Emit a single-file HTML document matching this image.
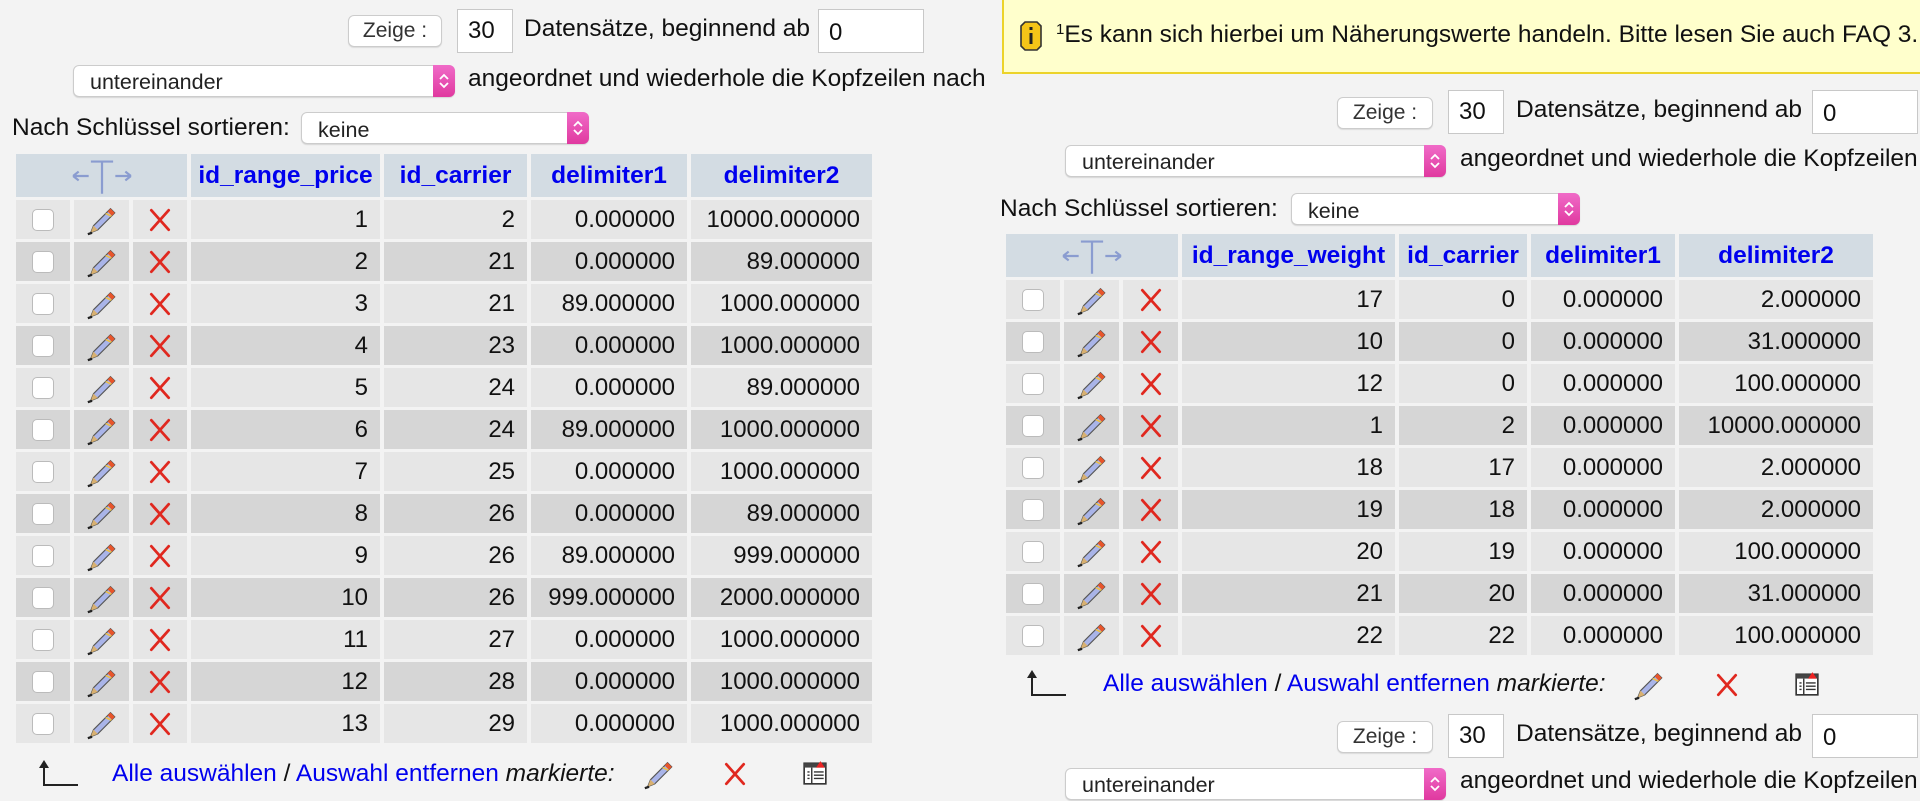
<!DOCTYPE html>
<html><head><meta charset="utf-8">
<style>
*{box-sizing:border-box;margin:0;padding:0}
body{width:1920px;height:794px;overflow:hidden;background:#f3f3f3;font-family:"Liberation Sans",Arial,sans-serif;font-size:24.5px;color:#111;position:relative}
.a{position:absolute;white-space:nowrap}
.btn{position:absolute;background:#fff;border:1px solid #ccc;border-radius:6px;font-size:21px;color:#333;text-align:center;box-shadow:0 1px 1px rgba(0,0,0,.1)}
.inp{position:absolute;background:#fff;border:1px solid #c8c8c8;font-size:24px;padding-left:10px}
.sel{position:absolute;background:#fff;border:1px solid #ccc;border-radius:6px;font-size:21.5px;color:#222;padding-left:16px;box-shadow:0 1px 1px rgba(0,0,0,.12)}
.sel .st{position:absolute;right:-1px;top:-1px;bottom:-1px;width:22px;border-radius:0 6px 6px 0;background:linear-gradient(#f06bc8,#e0399f)}
.sel .st svg{position:absolute;left:5px;top:50%;margin-top:-8px}
table{position:absolute;border-collapse:separate;border-spacing:4px 3px;table-layout:fixed}
th{background:#d3dce3;color:#0000ee;font-weight:bold;font-size:24.5px;height:43px;text-align:center;white-space:nowrap}
td{height:39px;text-align:right;padding-right:12px;font-size:24px}
tr.o td{background:#e6e6e6}
tr.e td{background:#d6d6d6}
td.i{padding:0;text-align:center}
td.i svg{vertical-align:middle}
.cb{display:inline-block;width:22px;height:22px;background:#fff;border:1px solid #bbb;border-radius:5px;vertical-align:middle}
.lnk{color:#0000ee}
</style></head><body>
<svg width="0" height="0" style="position:absolute">
<defs>
<symbol id="pen" viewBox="0 0 24 24"><path d="M4 21 L6 16 L18 4 L21 7 L9 19 Z" fill="#a9b4e8" stroke="#555" stroke-width="0.8"/><path d="M16 6 L18 4 L21 7 L19 9 Z" fill="#e8552a"/><path d="M15 7 L19 9 L18.2 9.8 L14.2 7.8Z" fill="#f0c040"/><path d="M4 21 L6 16 L9 19 Z" fill="#d8b070"/><path d="M2 22 L5 21" stroke="#222" stroke-width="1.6"/></symbol>
<symbol id="x" viewBox="0 0 24 24"><path d="M4 3 L20 21 M20 3 L4 21" stroke="#e0281f" stroke-width="2.6" stroke-linecap="round"/></symbol>
<symbol id="exp" viewBox="0 0 24 24"><rect x="2" y="3" width="20" height="19" fill="#fff" stroke="#333" stroke-width="1.5"/><rect x="2" y="3" width="20" height="4" fill="#444"/><path d="M9 7V22 M5 11H7 M5 14H7 M5 17H7 M11 11H20 M11 14H20 M11 17H20" stroke="#333" stroke-width="1.3"/><path d="M13 7 L17 1 L21 7Z" fill="#e22"/></symbol>
<symbol id="ar" viewBox="0 0 44 30"><path d="M8 4 V27 H42" fill="none" stroke="#222" stroke-width="2"/><path d="M3 10 L8 2 L13 10Z" fill="#222"/></symbol>
<symbol id="stp" viewBox="0 0 12 16"><path d="M2 6 L6 2 L10 6 M2 10 L6 14 L10 10" fill="none" stroke="#fff" stroke-width="1.8"/></symbol>
<symbol id="hd" viewBox="0 0 60 36"><path d="M4 18 H18 M4 18 L9 14 M4 18 L9 22 M42 18 H56 M56 18 L51 14 M56 18 L51 22 M20 5 H40 M30 5 V34" fill="none" stroke="#8a9cd0" stroke-width="2"/></symbol>
</defs></svg>

<!-- LEFT controls -->
<div class="btn" style="left:348px;top:15px;width:94px;height:32px;line-height:30px">Zeige :</div>
<div class="inp" style="left:457px;top:9px;width:56px;height:44px;line-height:42px">30</div>
<div class="a" style="left:524px;top:15px">Datensätze, beginnend ab</div>
<div class="inp" style="left:818px;top:9px;width:106px;height:44px;line-height:46px">0</div>
<div class="sel" style="left:73px;top:65px;width:382px;height:32px;line-height:32px">untereinander<div class="st"><svg width="12" height="16"><use href="#stp"/></svg></div></div>
<div class="a" style="left:468px;top:65px">angeordnet und wiederhole die Kopfzeilen nach</div>
<div class="a" style="left:12px;top:114px">Nach Schlüssel sortieren:</div>
<div class="sel" style="left:301px;top:112px;width:288px;height:32px;line-height:34px">keine<div class="st"><svg width="12" height="16"><use href="#stp"/></svg></div></div>

<table style="left:12px;top:151px;width:860px">
<colgroup><col style="width:54px"><col style="width:55px"><col style="width:54px"><col style="width:189px"><col style="width:143px"><col style="width:156px"><col style="width:181px"></colgroup>
<tr><th colspan="3"><svg width="72" height="40" style="vertical-align:middle"><use href="#hd"/></svg></th><th>id_range_price</th><th>id_carrier</th><th>delimiter1</th><th>delimiter2</th></tr>
<tr class="o"><td class="i"><span class="cb"></span></td><td class="i"><svg width="34" height="34"><use href="#pen"/></svg></td><td class="i"><svg width="26" height="26"><use href="#x"/></svg></td><td>1</td><td>2</td><td>0.000000</td><td>10000.000000</td></tr>
<tr class="e"><td class="i"><span class="cb"></span></td><td class="i"><svg width="34" height="34"><use href="#pen"/></svg></td><td class="i"><svg width="26" height="26"><use href="#x"/></svg></td><td>2</td><td>21</td><td>0.000000</td><td>89.000000</td></tr>
<tr class="o"><td class="i"><span class="cb"></span></td><td class="i"><svg width="34" height="34"><use href="#pen"/></svg></td><td class="i"><svg width="26" height="26"><use href="#x"/></svg></td><td>3</td><td>21</td><td>89.000000</td><td>1000.000000</td></tr>
<tr class="e"><td class="i"><span class="cb"></span></td><td class="i"><svg width="34" height="34"><use href="#pen"/></svg></td><td class="i"><svg width="26" height="26"><use href="#x"/></svg></td><td>4</td><td>23</td><td>0.000000</td><td>1000.000000</td></tr>
<tr class="o"><td class="i"><span class="cb"></span></td><td class="i"><svg width="34" height="34"><use href="#pen"/></svg></td><td class="i"><svg width="26" height="26"><use href="#x"/></svg></td><td>5</td><td>24</td><td>0.000000</td><td>89.000000</td></tr>
<tr class="e"><td class="i"><span class="cb"></span></td><td class="i"><svg width="34" height="34"><use href="#pen"/></svg></td><td class="i"><svg width="26" height="26"><use href="#x"/></svg></td><td>6</td><td>24</td><td>89.000000</td><td>1000.000000</td></tr>
<tr class="o"><td class="i"><span class="cb"></span></td><td class="i"><svg width="34" height="34"><use href="#pen"/></svg></td><td class="i"><svg width="26" height="26"><use href="#x"/></svg></td><td>7</td><td>25</td><td>0.000000</td><td>1000.000000</td></tr>
<tr class="e"><td class="i"><span class="cb"></span></td><td class="i"><svg width="34" height="34"><use href="#pen"/></svg></td><td class="i"><svg width="26" height="26"><use href="#x"/></svg></td><td>8</td><td>26</td><td>0.000000</td><td>89.000000</td></tr>
<tr class="o"><td class="i"><span class="cb"></span></td><td class="i"><svg width="34" height="34"><use href="#pen"/></svg></td><td class="i"><svg width="26" height="26"><use href="#x"/></svg></td><td>9</td><td>26</td><td>89.000000</td><td>999.000000</td></tr>
<tr class="e"><td class="i"><span class="cb"></span></td><td class="i"><svg width="34" height="34"><use href="#pen"/></svg></td><td class="i"><svg width="26" height="26"><use href="#x"/></svg></td><td>10</td><td>26</td><td>999.000000</td><td>2000.000000</td></tr>
<tr class="o"><td class="i"><span class="cb"></span></td><td class="i"><svg width="34" height="34"><use href="#pen"/></svg></td><td class="i"><svg width="26" height="26"><use href="#x"/></svg></td><td>11</td><td>27</td><td>0.000000</td><td>1000.000000</td></tr>
<tr class="e"><td class="i"><span class="cb"></span></td><td class="i"><svg width="34" height="34"><use href="#pen"/></svg></td><td class="i"><svg width="26" height="26"><use href="#x"/></svg></td><td>12</td><td>28</td><td>0.000000</td><td>1000.000000</td></tr>
<tr class="o"><td class="i"><span class="cb"></span></td><td class="i"><svg width="34" height="34"><use href="#pen"/></svg></td><td class="i"><svg width="26" height="26"><use href="#x"/></svg></td><td>13</td><td>29</td><td>0.000000</td><td>1000.000000</td></tr>
</table>

<svg class="a" style="left:36px;top:758px" width="44" height="30"><use href="#ar"/></svg>
<div class="a" style="left:112px;top:760px"><span class="lnk">Alle auswählen</span> / <span class="lnk">Auswahl entfernen</span> <i>markierte:</i></div>
<svg class="a" style="left:642px;top:757px" width="34" height="34"><use href="#pen"/></svg>
<svg class="a" style="left:722px;top:761px" width="26" height="26"><use href="#x"/></svg>
<svg class="a" style="left:802px;top:760px" width="26" height="26"><use href="#exp"/></svg>

<!-- RIGHT -->
<div class="a" style="left:1002px;top:0;width:940px;height:74px;background:#ffffcc;border:2px solid #ecd32a;border-top:none"></div>
<svg class="a" style="left:1020px;top:21px" width="22" height="30" viewBox="0 0 22 30"><path d="M5 1 H17 L21 5 V25 L17 29 H5 L1 25 V5 Z" fill="#f5c518" stroke="#333" stroke-width="1.6"/><rect x="9.5" y="12" width="3" height="11" fill="#222"/><rect x="9.5" y="6" width="3" height="3" fill="#222"/></svg>
<div class="a" style="left:1056px;top:21px"><sup style="font-size:15px;vertical-align:8px">1</sup>Es kann sich hierbei um Näherungswerte handeln. Bitte lesen Sie auch FAQ 3.11</div>

<div class="btn" style="left:1337px;top:97px;width:96px;height:32px;line-height:30px">Zeige :</div>
<div class="inp" style="left:1448px;top:90px;width:56px;height:44px;line-height:42px">30</div>
<div class="a" style="left:1516px;top:96px">Datensätze, beginnend ab</div>
<div class="inp" style="left:1812px;top:90px;width:106px;height:44px;line-height:46px">0</div>
<div class="sel" style="left:1065px;top:145px;width:381px;height:32px;line-height:32px">untereinander<div class="st"><svg width="12" height="16"><use href="#stp"/></svg></div></div>
<div class="a" style="left:1460px;top:145px">angeordnet und wiederhole die Kopfzeilen nach</div>
<div class="a" style="left:1000px;top:195px">Nach Schlüssel sortieren:</div>
<div class="sel" style="left:1291px;top:193px;width:289px;height:32px;line-height:34px">keine<div class="st"><svg width="12" height="16"><use href="#stp"/></svg></div></div>

<table style="left:1002px;top:231px;width:875px">
<colgroup><col style="width:54px"><col style="width:55px"><col style="width:55px"><col style="width:213px"><col style="width:128px"><col style="width:144px"><col style="width:194px"></colgroup>
<tr><th colspan="3"><svg width="72" height="40" style="vertical-align:middle"><use href="#hd"/></svg></th><th>id_range_weight</th><th>id_carrier</th><th>delimiter1</th><th>delimiter2</th></tr>
<tr class="o"><td class="i"><span class="cb"></span></td><td class="i"><svg width="34" height="34"><use href="#pen"/></svg></td><td class="i"><svg width="26" height="26"><use href="#x"/></svg></td><td>17</td><td>0</td><td>0.000000</td><td>2.000000</td></tr>
<tr class="e"><td class="i"><span class="cb"></span></td><td class="i"><svg width="34" height="34"><use href="#pen"/></svg></td><td class="i"><svg width="26" height="26"><use href="#x"/></svg></td><td>10</td><td>0</td><td>0.000000</td><td>31.000000</td></tr>
<tr class="o"><td class="i"><span class="cb"></span></td><td class="i"><svg width="34" height="34"><use href="#pen"/></svg></td><td class="i"><svg width="26" height="26"><use href="#x"/></svg></td><td>12</td><td>0</td><td>0.000000</td><td>100.000000</td></tr>
<tr class="e"><td class="i"><span class="cb"></span></td><td class="i"><svg width="34" height="34"><use href="#pen"/></svg></td><td class="i"><svg width="26" height="26"><use href="#x"/></svg></td><td>1</td><td>2</td><td>0.000000</td><td>10000.000000</td></tr>
<tr class="o"><td class="i"><span class="cb"></span></td><td class="i"><svg width="34" height="34"><use href="#pen"/></svg></td><td class="i"><svg width="26" height="26"><use href="#x"/></svg></td><td>18</td><td>17</td><td>0.000000</td><td>2.000000</td></tr>
<tr class="e"><td class="i"><span class="cb"></span></td><td class="i"><svg width="34" height="34"><use href="#pen"/></svg></td><td class="i"><svg width="26" height="26"><use href="#x"/></svg></td><td>19</td><td>18</td><td>0.000000</td><td>2.000000</td></tr>
<tr class="o"><td class="i"><span class="cb"></span></td><td class="i"><svg width="34" height="34"><use href="#pen"/></svg></td><td class="i"><svg width="26" height="26"><use href="#x"/></svg></td><td>20</td><td>19</td><td>0.000000</td><td>100.000000</td></tr>
<tr class="e"><td class="i"><span class="cb"></span></td><td class="i"><svg width="34" height="34"><use href="#pen"/></svg></td><td class="i"><svg width="26" height="26"><use href="#x"/></svg></td><td>21</td><td>20</td><td>0.000000</td><td>31.000000</td></tr>
<tr class="o"><td class="i"><span class="cb"></span></td><td class="i"><svg width="34" height="34"><use href="#pen"/></svg></td><td class="i"><svg width="26" height="26"><use href="#x"/></svg></td><td>22</td><td>22</td><td>0.000000</td><td>100.000000</td></tr>
</table>

<svg class="a" style="left:1024px;top:668px" width="44" height="30"><use href="#ar"/></svg>
<div class="a" style="left:1103px;top:670px"><span class="lnk">Alle auswählen</span> / <span class="lnk">Auswahl entfernen</span> <i>markierte:</i></div>
<svg class="a" style="left:1632px;top:668px" width="34" height="34"><use href="#pen"/></svg>
<svg class="a" style="left:1714px;top:672px" width="26" height="26"><use href="#x"/></svg>
<svg class="a" style="left:1794px;top:671px" width="26" height="26"><use href="#exp"/></svg>

<div class="btn" style="left:1337px;top:721px;width:96px;height:32px;line-height:30px">Zeige :</div>
<div class="inp" style="left:1448px;top:714px;width:56px;height:44px;line-height:42px">30</div>
<div class="a" style="left:1516px;top:720px">Datensätze, beginnend ab</div>
<div class="inp" style="left:1812px;top:714px;width:106px;height:44px;line-height:46px">0</div>
<div class="sel" style="left:1065px;top:768px;width:381px;height:32px;line-height:32px">untereinander<div class="st"><svg width="12" height="16"><use href="#stp"/></svg></div></div>
<div class="a" style="left:1460px;top:767px">angeordnet und wiederhole die Kopfzeilen nach</div>
</body></html>
